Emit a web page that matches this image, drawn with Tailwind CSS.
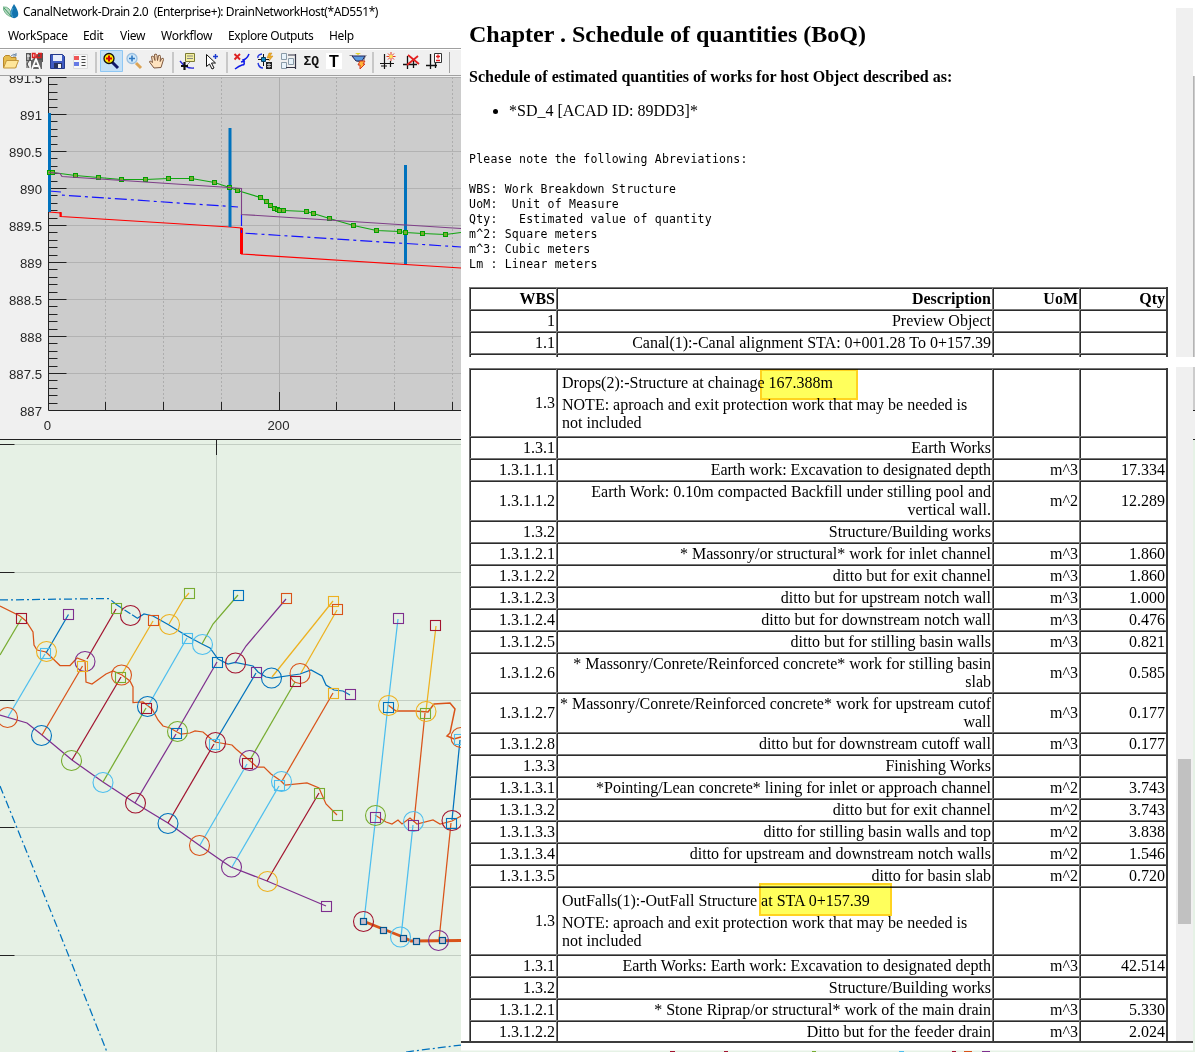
<!DOCTYPE html>
<html lang="en">
<head>
<meta charset="utf-8">
<title>CanalNetwork-Drain 2.0</title>
<script src="https://cdn.jsdelivr.net/npm/@tailwindcss/browser@4"></script>
</head>
<body class="w-[1195px] h-[1052px] overflow-hidden bg-white flex text-black">
<section class="w-[461px] h-full shrink-0 flex flex-col overflow-hidden font-['Noto_Sans',sans-serif]">
  <header class="h-6 flex items-center whitespace-pre text-[12px] leading-4">
    <svg class="ml-[3px] w-4 h-4 mr-1" viewBox="0 0 16 16"><path d="M0 3Q8 2 9 13Q1 11 0 3Z" fill="#b9d9c3" stroke="#6db187"/><path d="M1 4L8 12" stroke="#3f9a62"/><path d="M11 0Q17 9 14.500 12.500Q11 16 8 12.500Q6 8 11 0Z" fill="#1273ae"/><path d="M10 4Q7 10 10 13" stroke="#4fa6cf" fill="none"/></svg>
    <span id="title" class="tracking-[-0.42px]">CanalNetwork-Drain 2.0  (Enterprise+): DrainNetworkHost(*AD551*)</span>
  </header>
  <nav class="h-6 flex items-center pl-2 text-[12px] leading-4 tracking-[-0.3px]">
    <span class="w-[75px] tracking-[-0.35px]">WorkSpace</span><span class="w-[37px]">Edit</span><span class="w-[41px]">View</span><span class="w-[67px] tracking-[-0.25px]">Workflow</span><span class="w-[101px] whitespace-nowrap tracking-[-0.4px]">Explore Outputs</span><span>Help</span>
  </nav>
  <svg class="w-[461px] h-7 shrink-0" viewBox="0 48 461 28" fill="none">
    <path fill="#f0f0f0" d="M0 48h461v28H0z"/><path d="M0 48.500h461M0 75.500h461" stroke="#a0a0a0"/><path d="M0 49.500h461" stroke="#fff"/>
    <path d="M96 52v21M173 52v21M227 52v21M373 52v21M449.500 52v21" stroke="#a0a0a0"/>
    <path d="M100.500 50.500h22v21h-22z" fill="#c4e0f6" stroke="#8fc7f3"/>
    <!-- open -->
    <path d="M3.500 67.500v-10l2-2h4l1.500 2h5v10z" fill="#e6bc4d" stroke="#b8872a"/><path d="M3.500 68l3-7.500h12l-3 7.500z" fill="#ffe69a" stroke="#c3963b"/><path d="M11 56q3-3 5-1m0-2v3h-3" stroke="#6b88a6"/>
    <!-- cad import -->
    <path d="M26 53h5v8h-5zM31 61l8-8h4v9" fill="#555"/><path d="M28 54v6M27 56h3" stroke="#fff"/><path d="M31 69V60h11v9z" fill="#666"/><path d="M32 69l4-10 4 10M34 66h4" stroke="#fff" stroke-width="1.800"/><path d="M32.500 53.500h2.500v4h-2.500zM37 54v3.500h4v-4M38 53.500h4" stroke="#e01f1f" stroke-width="1.500"/><path d="M27 61v7M29 61l-2 3 2 4" stroke="#444"/>
    <!-- save -->
    <path d="M50.500 54.500h12l2 2v12h-14z" fill="#405cc4" stroke="#24398a"/><path d="M53 55h9v6h-9z" fill="#e8eefb"/><path d="M54 63h8v5h-8z" fill="#27335f"/><path d="M58 64h3v4h-3z" fill="#f2f2f2"/>
    <!-- list -->
    <path d="M73.500 54.500h14v14h-14z" fill="#f7f7f7" stroke="#ddd"/><path d="M74 56h5v4h-5z" fill="#e55"/><path d="M74 62h5v4h-5z" fill="#667ae5"/><path d="M81.500 56.500h4M81.500 59.500h4M81.500 62.500h4M81.500 65.500h4" stroke="#444"/>
    <!-- zoom in -->
    <path d="M112 62l6 6" stroke="#111a6a" stroke-width="3"/><circle cx="109" cy="58.500" r="5" fill="#ffeb00" stroke="#111" stroke-width="1.300"/><path d="M106 58.500h6M109 55.500v6" stroke="#d00000" stroke-width="2"/>
    <path d="M136 63l5 5" stroke="#dca455" stroke-width="3"/><circle cx="132" cy="58.500" r="5" fill="#cfe8fa" stroke="#9abfe0" stroke-width="1.300"/><path d="M129 58.500h6M132 55.500v6" stroke="#3279c1" stroke-width="1.600"/>
    <!-- hand -->
    <path d="M154 68L149.500 62q0-2 3 .5l-1-6q1.500-1.500 2.500 1l1 3-.5-6q2-1.500 2.500 1l.5 5 1-5q2-1 2 1l-.3 5 1.500-3q2-1 1.800 1l-2.500 8z" fill="#ffe3bf" stroke="#7e583e"/>
    <!-- note add -->
    <path d="M185.500 53.500h9v8h-9z" fill="#f3ef9d" stroke="#7b7a34"/><path d="M187 56h6M187 58.500h6M190 62l-3 3" stroke="#888"/><path d="M180 61q6 8 14 7" stroke="#2828d8" stroke-width="1.300"/><path d="M181 66h7M184.500 62v8" stroke="#111" stroke-width="2.200"/>
    <!-- pointer -->
    <path d="M206.500 54.500v12l3-2.500 2.500 5 2-1-2.500-5h4z" fill="#fff" stroke="#111"/><path d="M213 56.500h5M215.500 54v5" stroke="#1b3bd0" stroke-width="1.400"/>
    <!-- delete reach -->
    <path d="M249 54q-2 5-6 6 3 5-1 5-3 1-7 4M241 62l4-1" stroke="#0f1be8" stroke-width="1.500"/><path d="M234.500 54l5.500 5.500M240 54l-5.500 5.500" stroke="#d22" stroke-width="1.900"/>
    <!-- node calc -->
    <path d="M262 54q-5 1-4 4m0 5q1 5 5 5" stroke="#2233dd" stroke-width="1.400"/><path d="M258 59.500h11M263.500 54v12" stroke="#111"/><path d="M261.500 57.500h4v4h-4z" fill="#1688c4" stroke="#0a3b5d"/><path d="M269 53l-2 5h3l-1 3 4-5h-3l2-3z" fill="#efae28" stroke="#cb8417" stroke-width=".5"/><path d="M266 62h6v7h-6z" fill="#222"/><path d="M267 64.500h4M267 66.500h4M269 63v5" stroke="#eee" stroke-width=".7"/>
    <!-- profile sheets -->
    <path d="M281.500 53.500h5v6h-5zM281.500 62.500h5v6h-5zM288.500 58.500h5v6h-5z" fill="#e8f3fb" stroke="#8a9ba8"/><path d="M288 55h7M295.500 54v15M286 67.500h9" stroke="#334" stroke-width="1.200"/>
    <text x="303.500" y="65" class="font-['Liberation_Mono',monospace] text-[13px] font-bold" fill="#111">ΣQ</text>
    <path fill="#fff" d="M326 53h16v16h-16z"/><text x="329" y="67" class="font-['Liberation_Sans',sans-serif] text-[16px] font-bold" fill="#000">T</text>
    <!-- section -->
    <path d="M349.500 55.500h3l5 6h6l2-6h1" stroke="#888"/><path d="M352 56h13l-3 5h-6z" fill="#5c9be0" stroke="#225"/><path d="M355 53h6l-3 2z" fill="#e3d227"/><path d="M360 61h5l-2 3h2l-5 5v-4h-2z" fill="#ffb53b" stroke="#d63720"/>
    <!-- stations -->
    <path d="M380 63.500h14M384.500 54v15M390.500 61v6M381 66h6" stroke="#111" stroke-width="1.200"/><path d="M391 52v9M386.500 56.500h9M388 53.500l6 6M394 53.500l-6 6" stroke="#e63b28"/><circle cx="391" cy="56.500" r="1.800" fill="#ffe45a"/>
    <path d="M403 64.500h14M407.500 56v13M413.500 61v7" stroke="#111" stroke-width="1.300"/><path d="M408 55l11 9M418 56l-11 9" stroke="#e22020" stroke-width="1.800"/>
    <path d="M426 65.500h11M430.500 54v15M435.500 63v5" stroke="#111" stroke-width="1.300"/><path d="M434.500 53.500h7v9h-7z" fill="#fff" stroke="#333"/><path d="M436 56.500h4M438 54.500v4M436 60.500h4" stroke="#e22020" stroke-width="1.300"/>
  </svg>
  <svg id="profile" class="w-[461px] h-[363px] shrink-0 font-['Liberation_Sans',sans-serif] text-[13.200px]" viewBox="0 76 461 363" fill="none"></svg>
  <svg id="network" class="w-[461px] h-[613px] shrink-0" viewBox="0 439 461 613" fill="none"></svg>
</section>

<main class="w-[734px] h-full shrink-0 flex flex-col overflow-hidden font-['Liberation_Serif',serif]">
  <div class="h-[357px] flex overflow-hidden">
    <article class="w-[715px] pl-2 shrink-0">
      <h1 class="pt-[20px] h-[66px] text-[24px] leading-[28px] font-bold">Chapter . Schedule of quantities (BoQ)</h1>
      <h2 class="h-[35px] text-[16px] leading-[22px] font-bold">Schedule of estimated quantities of works for host Object described as:</h2>
      <ul class="h-[51px] text-[16px] leading-5 pl-10 list-disc"><li>*SD_4 [ACAD ID: 89DD3]*</li></ul>
      <pre class="h-[135px] font-['DejaVu_Sans_Mono',monospace] text-[11.500px] leading-[15px] tracking-[0.220px]">Please note the following Abreviations:

WBS: Work Breakdown Structure
UoM:  Unit of Measure
Qty:   Estimated value of quantity
m^2: Square meters
m^3: Cubic meters
Lm : Linear meters</pre>
      <div id="head"></div>
    </article>
    <div class="w-[17px] shrink-0 mt-2 bg-[#f0f0f0]"></div>
    <div class="w-[2px] mt-[76px] bg-[#ccc] border-l border-[#b4b4b4]"></div>
  </div>
  <div class="h-[10px] shrink-0"></div>
  <div class="h-[674px] shrink-0 flex overflow-hidden">
    <article class="w-[715px] pl-2 pt-px shrink-0"><div id="rows"></div></article>
    <div class="w-[17px] shrink-0 bg-[#f0f0f0] pt-[392px] px-[2px]"><div class="h-[165px] bg-[#c1c1c1]"></div></div>
    <div class="w-[2px]"><div class="h-[43px] bg-[#ccc]"></div><div class="h-[30px] bg-[#f0f0f0] border-y border-[#222]"></div><div class="h-[602px] bg-[#e6f2e6]"></div></div>
  </div>
  <svg class="w-[734px] h-[11px] shrink-0" viewBox="461 1041 734 11"><path fill="#3c3c3c" d="M461 1041h732v2H461z"/><path fill="#e6f2e6" d="M461 1050.500h734v1.500H461zM1193 1041h2v10h-2z"/><path d="M670 1051.500h5M724 1051.500h4" stroke="#a2142f"/><path d="M812 1051.500h4" stroke="#77ac30"/><path d="M899 1051.500h5" stroke="#4dbeee"/><path d="M952 1051.500h4" stroke="#a2142f"/><path d="M964 1051.500h8" stroke="#d95319"/><path d="M982 1051.500h8" stroke="#7e2f8e"/></svg>
</main>

<script>
const C = {b:'#0072bd', o:'#d95319', y:'#edb120', p:'#7e2f8e', g:'#77ac30', l:'#4dbeee', c:'#a2142f'};
const line = (pts, color, extra = 'stroke-width="1.25"') => `<polyline points="${pts}" stroke="${color}" ${extra}/>`;
const seg = (d, color, extra = '') => `<path d="${d}" stroke="${color}" ${extra}/>`;

// Longitudinal profile
let s = '<path fill="#f0f0f0" d="M0 76h461v363H0z"/><path fill="#ccc" d="M49 77h412v333H49z"/>' + seg('M48 77.500h413', '#aaa');
const ys = [410.5, 373.5, 336.5, 299.5, 262.5, 225.5, 188.5, 151.5, 114.5, 77.5];
ys.slice(1).forEach(y => s += seg(`M49 ${y}H461`, '#b2b2b2'));
[105.5, 163.5, 221.5, 336.5, 394.5, 452.5].forEach(x => s += seg(`M${x} 77V410`, '#adadad', 'stroke-dasharray="2 2"') + seg(`M${x} 402V410`, '#222'));
s += seg('M279.500 77V410', '#adadad') + seg('M279.500 392V410', '#222');
s += seg('M48.500 77V410.500H461', '#222');
ys.forEach((y, i) => {
  s += seg(`M49 ${y}H66.500`, '#222');
  if (i < 9) for (let k = 1; k < 5; k++) s += seg(`M49 ${Math.floor(y - 7.4 * k) + .5}H57.500`, '#222');
  s += `<text x="42" y="${y + 5.5}" text-anchor="end" fill="#262626">${887 + i / 2}</text>`;
});
s += '<text x="47.500" y="430" text-anchor="middle" fill="#262626">0</text><text x="278.500" y="430" text-anchor="middle" fill="#262626">200</text>';
s += line('49,212 61,213 61,216.5 230,227 241.5,228 241.5,254 461,268', '#f00', 'stroke-width="1.2"');
s += seg('M241.500 228V254', '#f00', 'stroke-width="3"') + seg('M60.500 212V217', '#f00', 'stroke-width="2"');
s += line('49,191 61,192 61,195 238,207', '#1414ff', 'stroke-width="1.200" stroke-dasharray="12 4 3 4"');
s += line('241.5,214 241.5,233 461,247', '#1414ff', 'stroke-width="1.200" stroke-dasharray="12 4 3 4"');
[[49.5,113,212],[230,128,227],[405.5,165,264]].forEach(([x, a, b]) => s += seg(`M${x} ${a}V${b}`, '#0072bd', 'stroke-width="3"'));
const ground = [[49.5,172.5],[52.5,172.5],[75.5,175.5],[98.5,177.5],[121.5,179.5],[145.5,179.5],[168.5,178.5],[191.5,178.5],[214.5,182.5],[229.5,187.5],[237.5,190.5],[260.5,197.5],[266.5,201.5],[270.5,205.5],[274.5,208.5],[277.5,209.5],[279.5,210.5],[283.5,210.5],[306.5,211.5],[313.5,213.5],[329.5,218.5],[353.5,225.5],[376.5,230.5],[399.5,231.5],[405.5,232.5],[422.5,233.5],[445.5,234.5]];
s += line(ground.join(' ') + ' 461,232.5', '#12a512', 'stroke-width="1.2"');
ground.forEach(([x, y]) => s += `<rect x="${x - 2}" y="${y - 2}" width="4" height="4" fill="#77ac30" stroke="#00a000"/>`);
s += line('49,172.5 60,173.5 62,176.5 229,187.5 241.5,188.5 241.5,214.5 461,228.5', '#7e3f87', 'stroke-width="1.1"');
document.getElementById('profile').innerHTML = s;

// Network plan
let n = '<path fill="#e6f1e5" d="M0 439h461v613H0z"/>';
[444.5, 572.5, 700.5, 827.5, 955.5].forEach(y => n += seg(`M0 ${y}H461`, '#c3cec3') + seg(`M0 ${y}H14.500`, '#222'));
n += seg('M216.500 439V1052', '#c3cec3') + seg('M216.500 439V455', '#222') + seg('M0 439.500H461', '#222');
const dd = 'stroke-width="1.25" stroke-dasharray="8 3 2 3"';
n += line('0,600 109,598.5 117,605', C.b, dd) + line('0,786 60,934 107,1052', C.b, dd) + line('406,1052 461,1045', C.b, dd);
n += line('117,605 137,618', C.b, 'stroke-width="1.25" stroke-dasharray="7 2"');
n += line('137,618.5 144,614 153,616 169,625 187,636 202,644 210,648 218,659 228,664 235,662.5 253,666 258,672 266,677 272,678 300,674 311,670 322,676 326,685 334,690 343,691 350,695', C.b);
n += line('0,606 20,616 26,621 33,632 34,645 37,650 46,652 60,665.5 70,665.5 77,658 85,661 86,682 92,684 106,674 113,671 122,675 130,681 133,687 133,702.5 143,702 152,709 158,720 163,726 170,728 177,732 181,734 190,733 195,731 203,732 210,738 215,742 232,745 236,749 249,760 257,767 264,767 271,774 281,781 285,785 307,783 319,788 326,804 337,815', C.o);
n += line('0,715 27,723 42,735 72,760 103,782 135,803 168,823 199,845 222,861 231,867 267,881 326,906', C.p);
n += line('388,705 396,711 415,711 428,712 434,704 450,703 455,709 450,733 447,736 454,739 461,737', C.o, 'stroke-width="1.5"');
n += line('375,815 386,822 392,824 398,820 402,824 410,818 417,824 433,820 440,824 452,821 461,816', C.o);
n += line('363,921 403,937 411,941 461,940.5', C.o, 'stroke-width="2.8"');
[['g','21.5,618.5 0,655'],['b','68.5,614.5 46,653'],['l','45,654 8,717'],['o','82.5,666 42,735'],['c','116,609 87,659'],['c','121,677 72,760'],['y','153,621 122,674'],['y','189,593 183,600 169,624'],['g','146,708 103,782'],['l','187,638 148,706'],['g','238,595 213,624 202,644'],['p','217,662 177,731'],['p','176,734 135,803'],['c','214,744 168,823'],['b','256,673 215,742'],['p','286,599 246,646 235,663'],['y','333,601 272,677'],['y','337,610 301,673'],['g','295,682 250,760'],['l','247,764 200,845'],['o','333,693 282,781'],['l','279,786 232,867'],['c','319,793 267,881'],['l','398,619 388,705 376,815 364,921'],['y','436,626 426,711'],['o','425,713 414,822'],['l','413,825 401,937'],['b','460,740 452,820'],['o','451,823 439,940']]
  .forEach(([c, p]) => n += line(p, C[c]));
[['y',46.5,651.5],['p',85,661.5],['c',130.5,615.5],['y',169.5,624.5],['l',202.5,644.5],['o',121.5,675],['b',147.5,706.5],['g',177.5,731.5],['c',215.5,742.5],['o',7.5,717.5],['b',41.5,735.5],['g',71.5,760.5],['l',103,782.5],['c',135.5,803],['b',168,823.5],['o',199.5,845.5],['p',231.5,867],['y',267.5,881.5],['l',281.5,781.5],['c',235.5,663],['b',271.5,678],['o',300,673.5],['y',388.5,705.5],['y',426,711.5],['p',249.5,760.5],['o',461,737.5],['g',375.5,815.5],['l',413.5,821.5],['c',452,820.5],['c',363.5,921.5],['l',400.5,937],['p',438.5,940.5]]
  .forEach(([c, x, y]) => n += `<circle cx="${x}" cy="${y}" r="10" stroke="${C[c]}" stroke-width="1.1"/>`);
[['c',21,618],['p',68,614],['l',45,653],['y',82,666],['g',116,608],['o',153,620],['g',189,593],['l',187,638],['b',217,662],['g',120,677],['c',146,708],['b',176,733],['l',214,744],['b',238,595],['o',286,598],['y',333,601],['o',337,609],['p',398,618],['c',435,625],['p',256,672],['c',295,681],['y',333,693],['p',350,694],['b',388,707],['g',425,713],['l',459,739],['c',247,763],['l',279,785],['g',319,793],['g',337,815],['p',326,906],['p',375,817],['p',413,825],['b',451,823]]
  .forEach(([c, x, y]) => n += `<rect x="${x - 4.5}" y="${y - 4.5}" width="10" height="10" stroke="${C[c]}" stroke-width="1.100"/>`);
[[363,921],[383,930],[403,938],[416,941],[442,940]].forEach(([x, y]) => n += `<rect x="${x - 2.5}" y="${y - 2.5}" width="6" height="6" fill="#c8c0cc" stroke="#00558f" stroke-width="1.2"/>`);
document.getElementById('network').innerHTML = n;

// Bill of quantities
const cell = 'shrink-0 flex items-center justify-end text-right border-t border-l border-[#777] shadow-[inset_1px_1px_0_#2b2b2b] pl-[2px] pr-px pt-px';
function row([wbs, desc, uom, qty, h = 22, mark], head) {
  const b = head ? ' font-bold' : '';
  const d = mark
    ? `<div class="w-full self-start text-left pl-[3px] pt-[4px] relative"><p class="leading-[18px] mb-[4px]">${desc[0]}</p><p class="w-[425px]">${desc[1]}</p><i class="absolute mix-blend-multiply bg-[#ffff5c] border-2 border-[#ffd320] ${mark}"></i></div>`
    : `<span>${desc}</span>`;
  return `<div class="flex w-[699px] text-[16px] leading-[18px] border-r-2 border-[#3c3c3c]" style="height:${h}px">
    <div class="w-[87px] ${cell}${b}">${wbs}</div><div class="w-[436px] ${cell}${b}">${d}</div><div class="w-[87px] ${cell}${b}">${uom}</div><div class="w-[87px] ${cell}${b}">${qty}</div></div>`;
}
document.getElementById('head').innerHTML =
  row(['WBS', 'Description', 'UoM', 'Qty'], true) + [['1', 'Preview Object', '', ''], ['1.1', 'Canal(1):-Canal alignment STA: 0+001.28 To 0+157.39', '', ''], ['', '', '', '']].map(r => row(r)).join('');
const note = 'NOTE: aproach and exit protection work that may be needed is not included';
document.getElementById('rows').innerHTML = [
  ['1.3', ['Drops(2):-Structure at chainage 167.388m', note], '', '', 68, 'left-[201px] top-[-1px] w-[98px] h-[31px]'],
  ['1.3.1', 'Earth Works', '', ''],
  ['1.3.1.1.1', 'Earth work: Excavation to designated depth', 'm^3', '17.334'],
  ['1.3.1.1.2', 'Earth Work: 0.10m compacted Backfill under stilling pool and vertical wall.', 'm^2', '12.289', 40],
  ['1.3.2', 'Structure/Building works', '', ''],
  ['1.3.1.2.1', '* Massonry/or structural* work for inlet channel', 'm^3', '1.860'],
  ['1.3.1.2.2', 'ditto but for exit channel', 'm^3', '1.860'],
  ['1.3.1.2.3', 'ditto but for upstream notch wall', 'm^3', '1.000'],
  ['1.3.1.2.4', 'ditto but for downstream notch wall', 'm^3', '0.476'],
  ['1.3.1.2.5', 'ditto but for stilling basin walls', 'm^3', '0.821'],
  ['1.3.1.2.6', '* Massonry/Conrete/Reinforced concrete* work for stilling basin slab', 'm^3', '0.585', 40],
  ['1.3.1.2.7', '* Massonry/Conrete/Reinforced concrete* work for upstream cutof wall', 'm^3', '0.177', 40],
  ['1.3.1.2.8', 'ditto but for downstream cutoff wall', 'm^3', '0.177'],
  ['1.3.3', 'Finishing Works', '', ''],
  ['1.3.1.3.1', '*Pointing/Lean concrete* lining for inlet or approach channel', 'm^2', '3.743'],
  ['1.3.1.3.2', 'ditto but for exit channel', 'm^2', '3.743'],
  ['1.3.1.3.3', 'ditto for stilling basin walls and top', 'm^2', '3.838'],
  ['1.3.1.3.4', 'ditto for upstream and downstream notch walls', 'm^2', '1.546'],
  ['1.3.1.3.5', 'ditto for basin slab', 'm^2', '0.720'],
  ['1.3', ['OutFalls(1):-OutFall Structure at STA 0+157.39', note], '', '', 68, 'left-[200px] top-[-5px] w-[133px] h-[33px]'],
  ['1.3.1', 'Earth Works: Earth work: Excavation to designated depth', 'm^3', '42.514'],
  ['1.3.2', 'Structure/Building works', '', ''],
  ['1.3.1.2.1', '* Stone Riprap/or structural* work of the main drain', 'm^3', '5.330'],
  ['1.3.1.2.2', 'Ditto but for the feeder drain', 'm^3', '2.024']
].map(r => row(r)).join('');
</script>
</body>
</html>
